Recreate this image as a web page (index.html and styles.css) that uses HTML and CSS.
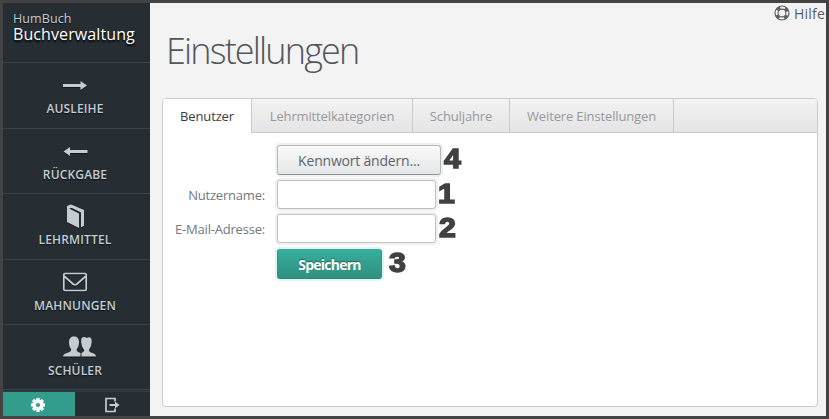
FILE: index.html
```html
<!DOCTYPE html>
<html lang="de">
<head>
<meta charset="utf-8">
<title>Einstellungen</title>
<link rel="stylesheet" href="styles.css">
</head>
<body>
<div class="app">
  <aside class="sidebar">
    <header class="brand"><span class="brand-small">HumBuch</span><span class="brand-big">Buchverwaltung</span></header>
    <nav class="nav">
      <a class="item"><svg width="34" height="24" viewBox="0 0 34 24"><path d="M5 11h17.500V8l6.500 4.500-6.500 4.500v-3H5z"/></svg><span>AUSLEIHE</span></a>
      <a class="item"><svg width="34" height="24" viewBox="0 0 34 24"><path d="M29.500 11H12V8l-6.500 4.500 6.500 4.500v-3h17.500z"/></svg><span>RÜCKGABE</span></a>
      <a class="item"><svg width="34" height="24" viewBox="0 0 34 24"><path d="M9 3.500Q8.500 2 10 1.500L13 .5 26 6v15.500l-3 2V8.500L14 4l-3 .5 10 5V24L9 18z"/></svg><span>LEHRMITTEL</span></a>
      <a class="item"><svg width="34" height="24" viewBox="0 0 34 24"><path class="line" d="M7 3.500h20q1.200 0 1.200 1.200v14.600q0 1.200-1.200 1.200H7q-1.200 0-1.200-1.200V4.700Q5.800 3.500 7 3.500zM6 6l9 8q2 1.500 4 0l9-8"/></svg><span>MAHNUNGEN</span></a>
      <a class="item people"><svg width="34" height="24" viewBox="0 0 34 24"><path d="M1 21.500c.3-2.300 2-2.600 4-3.400 3-1 4.300-1.500 4.200-4C7.500 12.500 7 9.500 7 7c0-3.500 2-5.500 5-5.500S17 3.500 17 7c0 2.500-.7 5.500-2.300 7-.2 2.500.8 3 3.800 4.100v3.400z"/><path d="M19.500 21.500v-3.600c1.700-.7 3-1.300 2.600-3.400-1.700-1.200-3.100-5.700-2.900-9.500.1-2.700 3-4 5.500-2 3-1.800 5-.2 5 2.500 0 3.500-1 7.500-2.700 9-.1 2.300 1 2.700 3.300 3.500 2 .7 3.500 1.200 3.700 3.500z"/></svg><span>SCHÜLER</span></a>
    </nav>
    <footer class="tools">
      <a class="tool active"><svg width="16" height="16" viewBox="0 0 16 16"><g fill="#fff"><rect id="t" x="6.300" y="1" width="3.400" height="14" rx=".6"/><use href="#t" transform="rotate(45 8 8)"/><use href="#t" transform="rotate(90 8 8)"/><use href="#t" transform="rotate(135 8 8)"/><circle cx="8" cy="8" r="5.200"/></g><circle cx="8" cy="8" r="2.100" fill="#329c8d"/></svg></a>
      <a class="tool"><svg width="18" height="16" viewBox="0 0 18 16"><path class="line" d="M12 4.500V1.500H3v13h9v-3"/><path d="M6.500 7h5.500V4.500L16.500 8 12 11.500V9H6.500z"/></svg></a>
    </footer>
  </aside>
  <main class="content">
    <a class="help"><svg width="16" height="16" viewBox="0 0 16 16"><g fill="none" stroke="#5b6066"><circle cx="8" cy="8" r="7" stroke-width="1.200"/><circle cx="8" cy="8" r="3.900" stroke-width="1.100"/><circle cx="8" cy="8" r="5.500" stroke-width="3" stroke-dasharray="3.800 4.839" stroke-dashoffset="-2.420"/></g></svg><span>Hilfe</span></a>
    <h1>Einstellungen</h1>
    <section class="panel">
      <div class="tabs">
        <div class="tab t1 selected"><span>Benutzer</span></div><div class="tab t2"><span>Lehrmittelkategorien</span></div><div class="tab t3"><span>Schuljahre</span></div><div class="tab t4"><span>Weitere Einstellungen</span></div>
      </div>
      <form class="form">
        <div class="row r1"><label></label><button type="button" class="btn"><span>Kennwort ändern...</span></button><b class="mark">4</b></div>
        <div class="row r2"><label>Nutzername:</label><input type="text"><b class="mark">1</b></div>
        <div class="row r3"><label>E-Mail-Adresse:</label><input type="text"><b class="mark">2</b></div>
        <div class="row r4"><label></label><button type="button" class="btn primary"><span>Speichern</span></button><b class="mark">3</b></div>
      </form>
    </section>
  </main>
</div>
</body>
</html>
```
FILE: styles.css
```css
* { box-sizing: border-box; }
body { margin: 0; font-family: "Open Sans", sans-serif; overflow: hidden; }
.app { width: 829px; height: 419px; border: 3px solid #434343; display: flex; background: #f3f3f3; }
.sidebar { width: 147px; background: #262e34; color: #c4ced2; display: flex; flex-direction: column; text-shadow: 0 1px 1px #0a0f12; }
.brand { height: 59px; padding: 8px 0 0 10px; display: flex; flex-direction: column; white-space: nowrap; }
.brand-small { font-size: 12.500px; line-height: 15px; letter-spacing: .1px; }
.brand-big { font-size: 16px; line-height: 16px; color: #fff; text-shadow: 0 2px 2px #000; letter-spacing: .1px; }
.item { height: 65.500px; border-top: 1px solid #3a444b; display: flex; flex-direction: column; align-items: center; padding: 10px 3px 0 0; font-size: 12px; line-height: 16px; font-weight: 600; letter-spacing: .15px; }
.item svg { fill: #c4ced2; margin-bottom: 4px; filter: drop-shadow(0 1px 0 #11171a); flex: none; }
.people svg { margin-left: 7px; }
.line { fill: none; stroke: #c4ced2; stroke-width: 1.700; }
.nav { border-bottom: 1px solid #3a444b; height: 328px; }
.tools { height: 25px; margin-top: 1px; border-top: 1px solid #343d43; display: flex; }
.tool { flex: 1; display: flex; align-items: center; justify-content: center; fill: #c4ced2; padding: 2px 1px 0 0; }
.tool.active { flex: 0 0 72px; background: #329c8d; padding-right: 2px; }
.content { flex: 1; display: flex; flex-direction: column; padding: 0 8px 9px 12px; }
.help { display: flex; align-items: center; justify-content: flex-end; gap: 4px; height: 20px; margin-right: -7px; color: #5b6066; font-size: 14px; letter-spacing: .2px; }
h1 { margin: 1px 0 0 4px; height: 74px; line-height: 54px; font-size: 36px; font-weight: 300; color: #51565c; letter-spacing: -1.850px; }
.panel { flex: 1; border: 1px solid #c9cbcd; border-radius: 4px; background: #fff; overflow: hidden; width: 656px; }
.tabs { height: 34px; display: flex; background: linear-gradient(#f3f3f3, #e4e4e6); box-shadow: inset 0 -1px #c9cbcd; }
.tab { height: 34px; border-right: 1px solid #c9cbcd; display: flex; align-items: center; justify-content: center; color: #96999c; font-size: 13px; white-space: nowrap; letter-spacing: -.14px; }
.t1 { width: 89px; }
.t2 { width: 161px; }
.t3 { width: 97px; }
.t4 { width: 164px; }
.selected { background: #fff; color: #3b3e41; }
.form { padding-top: 12px; display: flex; flex-direction: column; }
.row { display: flex; height: 34px; }
.r1 { height: 35px; }
.r3 { height: 35px; }
label { width: 102px; margin-right: 12px; text-align: right; font-size: 13px; line-height: 30px; color: #73787e; white-space: nowrap; letter-spacing: -.2px; }
input { width: 159px; height: 29px; border: 1px solid #bfc1c3; border-radius: 3px; background: #fff; box-shadow: 0 0 0 2px #f0f0f0; padding: 0 8px; }
.btn { width: 164px; height: 30px; border: 1px solid #b5b7b9; border-bottom-color: #929597; border-radius: 3px; background: linear-gradient(#fafafa, #e5e6e7); box-shadow: 0 0 0 2px #f0f0f0; font: 14px "Open Sans", sans-serif; letter-spacing: -.2px; color: #5f6468; padding: 0; white-space: nowrap; }
.primary { width: 105px; border-color: #38a899 #329586 #2c8476; background: linear-gradient(#37ad9d, #30917f); box-shadow: 0 0 0 2px #def5f1; color: #fff; font-weight: 700; letter-spacing: -.75px; text-shadow: 0 -1px 1px #1d665b; }
.mark { font: 900 27px/28px "Liberation Sans", sans-serif; color: #414141; -webkit-text-stroke: 1.500px #414141; margin-left: 4px; transform: scaleX(1.12); }
.r2 .mark { margin-left: 3px; }
.r4 .mark { margin-left: 8px; }
```
